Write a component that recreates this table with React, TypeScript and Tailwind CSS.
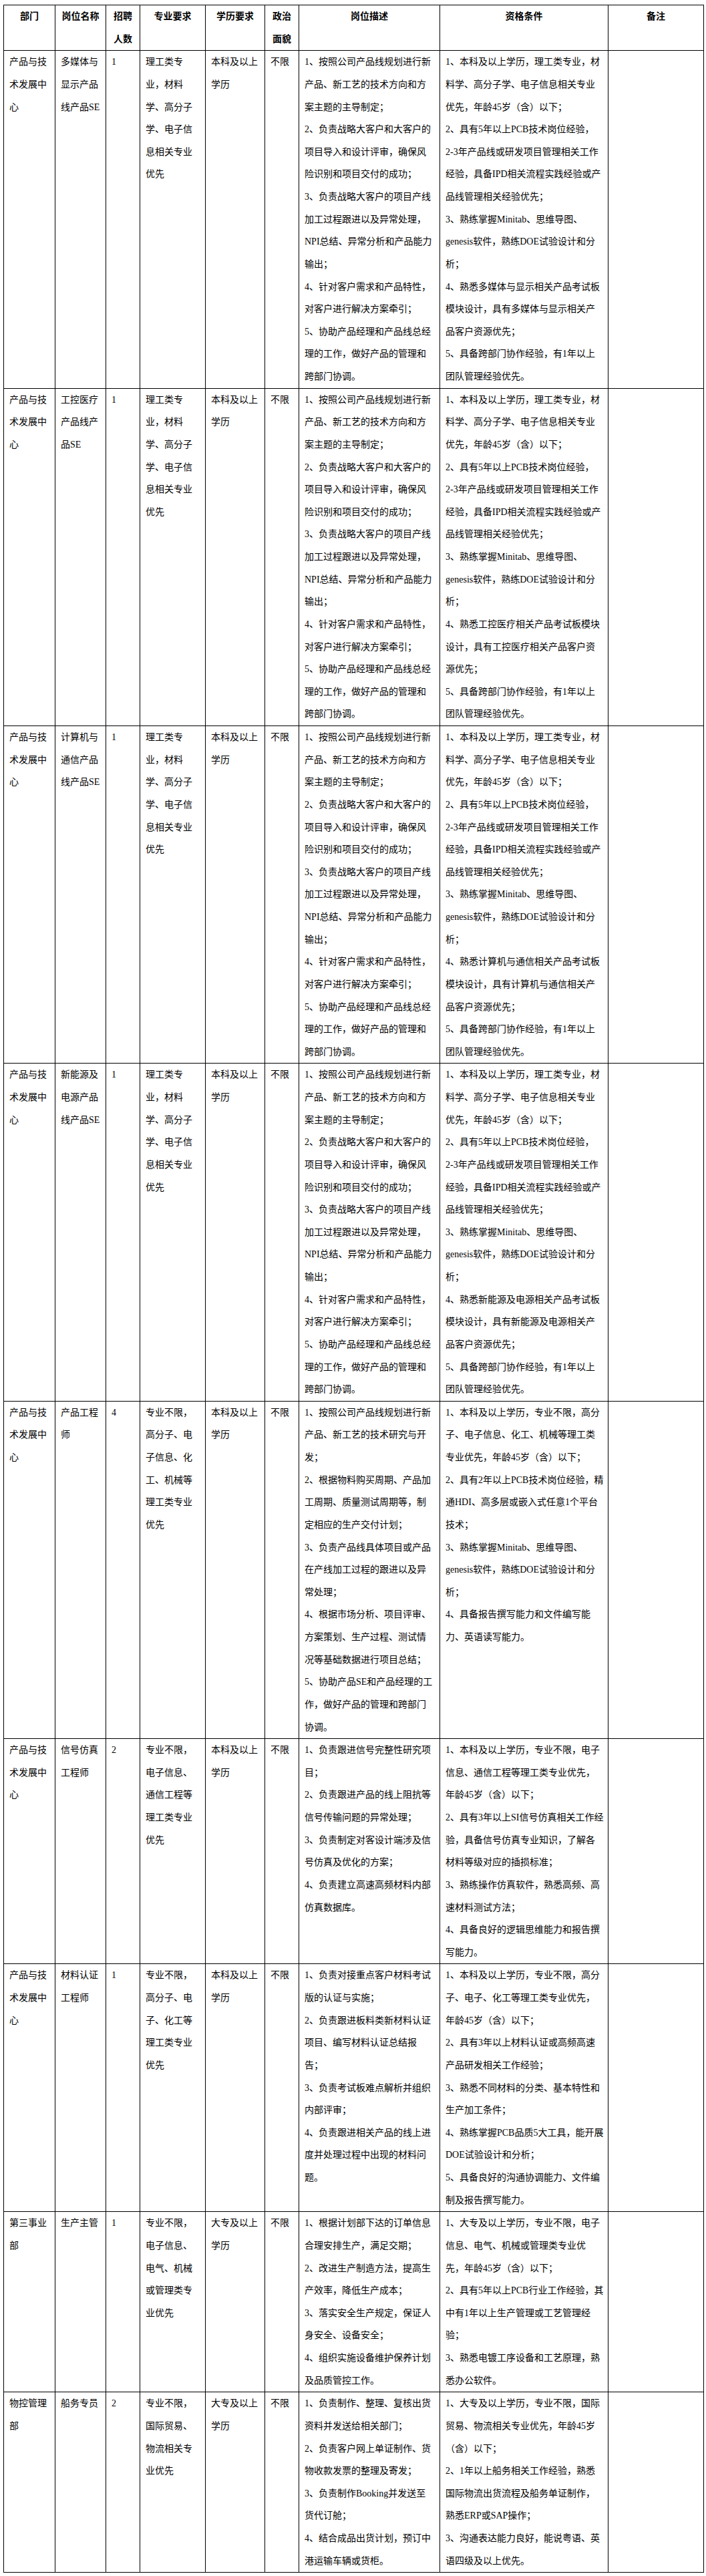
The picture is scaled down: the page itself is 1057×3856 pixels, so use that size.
const COLS = [77, 76, 51, 98, 89, 51, 211, 252, 143]

const HEADERS = ['部门', '岗位名称', '招聘\n人数', '专业要求', '学历要求', '政治\n面貌', '岗位描述', '资格条件', '备注']

const SE_DESC = `1、按照公司产品线规划进行新
产品、新工艺的技术方向和方
案主题的主导制定；
2、负责战略大客户和大客户的
项目导入和设计评审，确保风
险识别和项目交付的成功；
3、负责战略大客户的项目产线
加工过程跟进以及异常处理，
NPI总结、异常分析和产品能力
输出；
4、针对客户需求和产品特性，
对客户进行解决方案牵引；
5、协助产品经理和产品线总经
理的工作，做好产品的管理和
跨部门协调。`

// qualification text is identical for the four SE roles except point 4
function seQual(point4: string) {
  return `1、本科及以上学历，理工类专业，材
料学、高分子学、电子信息相关专业
优先，年龄45岁（含）以下；
2、具有5年以上PCB技术岗位经验，
2-3年产品线或研发项目管理相关工作
经验，具备IPD相关流程实践经验或产
品线管理相关经验优先；
3、熟练掌握Minitab、思维导图、
genesis软件，熟练DOE试验设计和分
析；
${point4}
5、具备跨部门协作经验，有1年以上
团队管理经验优先。`
}

const SE_MAJOR = '理工类专\n业，材料\n学、高分子\n学、电子信\n息相关专业\n优先'
const CENTER = '产品与技\n术发展中\n心'

interface Job {
  dept: string
  title: string
  num: string
  major: string
  edu: string
  pol: string
  desc: string
  qual: string
}

const JOBS: Job[] = [
  {
    dept: CENTER,
    title: '多媒体与\n显示产品\n线产品SE',
    num: '1',
    major: SE_MAJOR,
    edu: '本科及以上\n学历',
    pol: '不限',
    desc: SE_DESC,
    qual: seQual('4、熟悉多媒体与显示相关产品考试板\n模块设计，具有多媒体与显示相关产\n品客户资源优先；'),
  },
  {
    dept: CENTER,
    title: '工控医疗\n产品线产\n品SE',
    num: '1',
    major: SE_MAJOR,
    edu: '本科及以上\n学历',
    pol: '不限',
    desc: SE_DESC,
    qual: seQual('4、熟悉工控医疗相关产品考试板模块\n设计，具有工控医疗相关产品客户资\n源优先；'),
  },
  {
    dept: CENTER,
    title: '计算机与\n通信产品\n线产品SE',
    num: '1',
    major: SE_MAJOR,
    edu: '本科及以上\n学历',
    pol: '不限',
    desc: SE_DESC,
    qual: seQual('4、熟悉计算机与通信相关产品考试板\n模块设计，具有计算机与通信相关产\n品客户资源优先；'),
  },
  {
    dept: CENTER,
    title: '新能源及\n电源产品\n线产品SE',
    num: '1',
    major: SE_MAJOR,
    edu: '本科及以上\n学历',
    pol: '不限',
    desc: SE_DESC,
    qual: seQual('4、熟悉新能源及电源相关产品考试板\n模块设计，具有新能源及电源相关产\n品客户资源优先；'),
  },
  {
    dept: CENTER,
    title: '产品工程\n师',
    num: '4',
    major: '专业不限，\n高分子、电\n子信息、化\n工、机械等\n理工类专业\n优先',
    edu: '本科及以上\n学历',
    pol: '不限',
    desc: `1、按照公司产品线规划进行新
产品、新工艺的技术研究与开
发；
2、根据物料购买周期、产品加
工周期、质量测试周期等，制
定相应的生产交付计划；
3、负责产品线具体项目或产品
在产线加工过程的跟进以及异
常处理；
4、根据市场分析、项目评审、
方案策划、生产过程、测试情
况等基础数据进行项目总结；
5、协助产品SE和产品经理的工
作，做好产品的管理和跨部门
协调。`,
    qual: `1、本科及以上学历，专业不限，高分
子、电子信息、化工、机械等理工类
专业优先，年龄45岁（含）以下；
2、具有2年以上PCB技术岗位经验，精
通HDI、高多层或嵌入式任意1个平台
技术；
3、熟练掌握Minitab、思维导图、
genesis软件，熟练DOE试验设计和分
析；
4、具备报告撰写能力和文件编写能
力、英语读写能力。`,
  },
  {
    dept: CENTER,
    title: '信号仿真\n工程师',
    num: '2',
    major: '专业不限，\n电子信息、\n通信工程等\n理工类专业\n优先',
    edu: '本科及以上\n学历',
    pol: '不限',
    desc: `1、负责跟进信号完整性研究项
目；
2、负责跟进产品的线上阻抗等
信号传输问题的异常处理；
3、负责制定对客设计端涉及信
号仿真及优化的方案；
4、负责建立高速高频材料内部
仿真数据库。`,
    qual: `1、本科及以上学历，专业不限，电子
信息、通信工程等理工类专业优先，
年龄45岁（含）以下；
2、具有3年以上SI信号仿真相关工作经
验，具备信号仿真专业知识，了解各
材料等级对应的插损标准；
3、熟练操作仿真软件，熟悉高频、高
速材料测试方法；
4、具备良好的逻辑思维能力和报告撰
写能力。`,
  },
  {
    dept: CENTER,
    title: '材料认证\n工程师',
    num: '1',
    major: '专业不限，\n高分子、电\n子、化工等\n理工类专业\n优先',
    edu: '本科及以上\n学历',
    pol: '不限',
    desc: `1、负责对接重点客户材料考试
版的认证与实施；
2、负责跟进板料类新材料认证
项目、编写材料认证总结报
告；
3、负责考试板难点解析并组织
内部评审；
4、负责跟进相关产品的线上进
度并处理过程中出现的材料问
题。`,
    qual: `1、本科及以上学历，专业不限，高分
子、电子、化工等理工类专业优先，
年龄45岁（含）以下；
2、具有3年以上材料认证或高频高速
产品研发相关工作经验；
3、熟悉不同材料的分类、基本特性和
生产加工条件；
4、熟练掌握PCB品质5大工具，能开展
DOE试验设计和分析；
5、具备良好的沟通协调能力、文件编
制及报告撰写能力。`,
  },
  {
    dept: '第三事业\n部',
    title: '生产主管',
    num: '1',
    major: '专业不限，\n电子信息、\n电气、机械\n或管理类专\n业优先',
    edu: '大专及以上\n学历',
    pol: '不限',
    desc: `1、根据计划部下达的订单信息
合理安排生产，满足交期；
2、改进生产制造方法，提高生
产效率，降低生产成本；
3、落实安全生产规定，保证人
身安全、设备安全；
4、组织实施设备维护保养计划
及品质管控工作。`,
    qual: `1、大专及以上学历，专业不限，电子
信息、电气、机械或管理类专业优
先，年龄45岁（含）以下；
2、具有5年以上PCB行业工作经验，其
中有1年以上生产管理或工艺管理经
验；
3、熟悉电镀工序设备和工艺原理，熟
悉办公软件。`,
  },
  {
    dept: '物控管理\n部',
    title: '船务专员',
    num: '2',
    major: '专业不限，\n国际贸易、\n物流相关专\n业优先',
    edu: '大专及以上\n学历',
    pol: '不限',
    desc: `1、负责制作、整理、复核出货
资料并发送给相关部门；
2、负责客户网上单证制作、货
物收款发票的整理及寄发；
3、负责制作Booking并发送至
货代订舱；
4、结合成品出货计划，预订中
港运输车辆或货柜。`,
    qual: `1、大专及以上学历，专业不限，国际
贸易、物流相关专业优先，年龄45岁
（含）以下；
2、1年以上船务相关工作经验，熟悉
国际物流出货流程及船务单证制作，
熟悉ERP或SAP操作；
3、沟通表达能力良好，能说粤语、英
语四级及以上优先。`,
  },
]

// explicit line breaks, no automatic wrapping
const cell = 'border border-black align-top pl-[8px] pr-[2px] py-0 whitespace-pre text-left'

export default function App() {
  return (
    <div className="min-h-[3856px] bg-white pt-[7px] pl-[5px] text-black [font-family:'Liberation_Serif','Noto_Sans_CJK_SC',serif]">
      <table className="w-[1048px] table-fixed border-collapse text-[14px] leading-[33.63px]">
        <colgroup>
          {COLS.map((w, i) => (
            <col key={i} style={{ width: w }} />
          ))}
        </colgroup>
        <thead>
          <tr>
            {HEADERS.map((h) => (
              <th key={h} className="border border-black align-top px-[2px] py-0 whitespace-pre text-center font-bold">
                {h}
              </th>
            ))}
          </tr>
        </thead>
        <tbody>
          {JOBS.map((job, i) => (
            <tr key={i}>
              <td className={cell}>{job.dept}</td>
              <td className={cell}>{job.title}</td>
              <td className={cell}>{job.num}</td>
              <td className={cell}>{job.major}</td>
              <td className={cell}>{job.edu}</td>
              <td className={cell}>{job.pol}</td>
              <td className={cell}>{job.desc}</td>
              <td className={cell}>{job.qual}</td>
              <td className={cell}></td>
            </tr>
          ))}
        </tbody>
      </table>
    </div>
  )
}
